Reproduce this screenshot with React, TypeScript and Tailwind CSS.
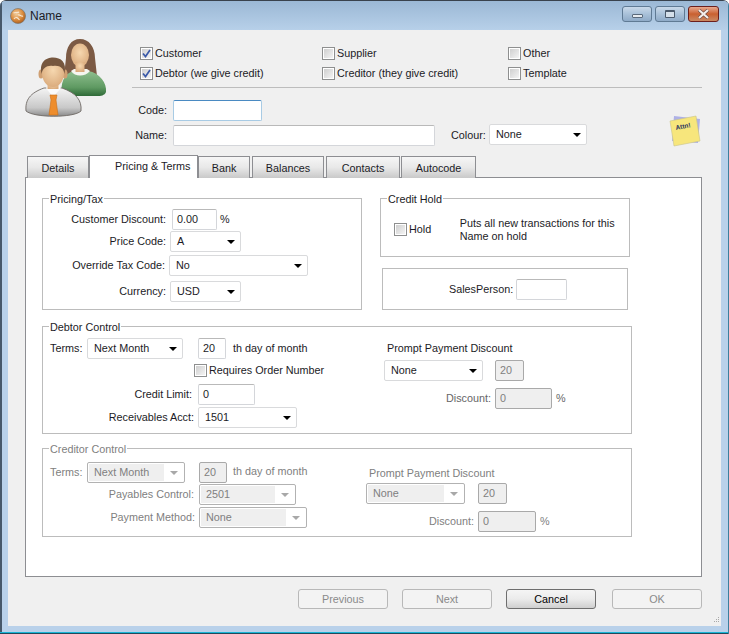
import React from "react";

const font = "font-['Liberation_Sans','Noto_Sans',sans-serif]";

// checkbox with aero style fill
function Check({ checked = false }: { checked?: boolean }) {
  return (
    <div className="flex h-[13px] w-[13px] shrink-0 items-center justify-center border border-[#8e8f8f] bg-white p-px">
      <div className="relative h-full w-full bg-gradient-to-br from-[#cfcfcf] to-[#f4f4f4]">
        {checked && (
          <svg viewBox="0 0 9 9" className="absolute left-0 top-0 h-[9px] w-[9px]">
            <path d="M1 4.5 L3.5 7.5 L8 1" fill="none" stroke="#3b5aa8" strokeWidth="1.7" />
          </svg>
        )}
      </div>
    </div>
  );
}

function CheckRow({ label, checked }: { label: string; checked?: boolean }) {
  return (
    <div className="flex h-[20px] items-start gap-[2px]">
      <Check checked={checked} />
      <span className="-mt-px leading-[14px]">{label}</span>
    </div>
  );
}

function Input({ value, className }: { value?: string; className: string }) {
  return (
    <div className={`flex h-[21px] shrink-0 items-center rounded-[2px] border border-[#d4d6da] border-t-[#b9b9b9] bg-white px-[4px] ${className}`}>
      {value}
    </div>
  );
}

function DisabledInput({ value, className }: { value: string; className: string }) {
  return (
    <div className={`flex h-[21px] shrink-0 items-center rounded-[2px] border border-[#a9a9a9] bg-[#efefef] px-[4px] text-[#808080] ${className}`}>
      {value}
    </div>
  );
}

function Select({ value, className }: { value: string; className: string }) {
  return (
    <div className={`flex h-[21px] shrink-0 items-center justify-between rounded-[2px] border border-[#d9dadc] bg-white pl-[6px] pr-[5px] ${className}`}>
      <span>{value}</span>
      <span className="h-0 w-0 border-x-[4px] border-t-[4px] border-x-transparent border-t-black" />
    </div>
  );
}

function DisabledSelect({ value, className }: { value: string; className: string }) {
  return (
    <div className={`flex h-[21px] shrink-0 items-stretch rounded-[2px] border border-[#b2b2b2] bg-white p-px text-[#808080] ${className}`}>
      <span className="flex flex-1 items-center bg-[#efefef] pl-[5px]">{value}</span>
      <span className="flex w-[19px] items-center justify-center">
        <span className="h-0 w-0 border-x-[4px] border-t-[4px] border-x-transparent border-t-[#a8a8a8]" />
      </span>
    </div>
  );
}

function Tab({ label, className }: { label: string; className: string }) {
  return (
    <div className={`flex h-[22px] items-center justify-center border border-b-0 border-[#8d8e92] bg-gradient-to-b from-[#f6f6f6] via-[#e8e8e8] to-[#c9c9c9] pt-px ${className}`}>
      {label}
    </div>
  );
}

function Group({ title, disabled, className, children }: { title?: string; disabled?: boolean; className: string; children: React.ReactNode }) {
  return (
    <div className={`relative border border-[#bcbcbc] ${className}`}>
      {title && (
        <span className={`absolute left-[6px] top-[-7px] bg-white px-[1px] leading-[14px] ${disabled ? "text-[#808080]" : ""}`}>
          {title}
        </span>
      )}
      {children}
    </div>
  );
}

function Button({ label, active }: { label: string; active?: boolean }) {
  if (active) {
    return (
      <div className="flex h-[20px] w-[90px] items-center justify-center rounded-[3px] border border-[#6e6e6e] bg-gradient-to-b from-[#f5f5f5] via-[#ebebeb] to-[#cfcfcf] text-black">
        {label}
      </div>
    );
  }
  return (
    <div className="flex h-[20px] w-[90px] items-center justify-center rounded-[3px] border border-[#b8b8b8] bg-[#f3f3f3] text-[#8a8a8a]">
      {label}
    </div>
  );
}

function AppIcon() {
  return (
    <svg viewBox="0 0 16 16" className="h-[16px] w-[16px]">
      <defs>
        <radialGradient id="globe" cx="40%" cy="35%" r="70%">
          <stop offset="0%" stopColor="#f2cfa0" />
          <stop offset="60%" stopColor="#d98a3c" />
          <stop offset="100%" stopColor="#a85a1c" />
        </radialGradient>
      </defs>
      <circle cx="8" cy="8" r="7.5" fill="url(#globe)" stroke="#7d7468" strokeWidth="0.7" />
      <path d="M3.5 5 C5.5 3.5 7 5.5 9 4 M4 11 C6 8 8 10 9.5 12 M8 7 C10 6 11 9 13 8" fill="none" stroke="#f7e6cf" strokeWidth="1.1" />
    </svg>
  );
}

function WindowButtons() {
  return (
    <div className="flex gap-[3px]">
      <div className="flex h-[16px] w-[30px] items-end justify-center rounded-[3px] border border-[#5f7a94] bg-gradient-to-b from-[#c9d9e9] via-[#a9c1d9] to-[#8fabc8] pb-[3px]">
        <div className="h-[4px] w-[11px] rounded-[1px] border border-[#5a6a7c] bg-[#e6ebf0]" />
      </div>
      <div className="flex h-[16px] w-[30px] items-center justify-center rounded-[3px] border border-[#5f7a94] bg-gradient-to-b from-[#c9d9e9] via-[#a9c1d9] to-[#8fabc8]">
        <div className="h-[8px] w-[10px] rounded-[1px] border border-t-2 border-[#4b5a6c] bg-[#d5e0ea]" />
      </div>
      <div className="flex h-[16px] w-[31px] items-center justify-center rounded-[3px] border border-[#6c1f1c] bg-gradient-to-b from-[#e8a98e] via-[#c9602f] to-[#c98862]">
        <svg viewBox="0 0 13 10" className="h-[10px] w-[13px]">
          <path d="M2 1 L11 9 M11 1 L2 9" stroke="#6a4a44" strokeWidth="3.4" />
          <path d="M2 1 L11 9 M11 1 L2 9" stroke="#f4eeea" strokeWidth="2.2" />
        </svg>
      </div>
    </div>
  );
}

function People() {
  return (
    <svg viewBox="25 38 82 80" className="h-[80px] w-[82px]">
      <defs>
        <linearGradient id="green" x1="0" y1="0" x2="0" y2="1">
          <stop offset="0%" stopColor="#8fbf8f" />
          <stop offset="65%" stopColor="#5f9a62" />
          <stop offset="100%" stopColor="#2f6a38" />
        </linearGradient>
        <linearGradient id="shirt" x1="0" y1="0" x2="0" y2="1">
          <stop offset="0%" stopColor="#f4f4f4" />
          <stop offset="70%" stopColor="#c8c8c8" />
          <stop offset="100%" stopColor="#8a8a8a" />
        </linearGradient>
        <radialGradient id="skin" cx="50%" cy="40%" r="65%">
          <stop offset="0%" stopColor="#f6d8b0" />
          <stop offset="100%" stopColor="#d9a97a" />
        </radialGradient>
      </defs>
      {/* woman */}
      <path d="M80 39 C71 39 66 47 66 58 L64 76 L97 76 L95 58 C95 47 89 39 80 39 Z" fill="#7c5a44" />
      <path d="M62 96 C60 83 64 74 73 71 L88 71 C100 73 107 83 106 92 C104 97 98 96 90 96 Z" fill="url(#green)" />
      <path d="M71 71 C75 77 85 77 90 71 L87 69 L74 69 Z" fill="#f6f6f0" />
      <ellipse cx="80" cy="55" rx="9" ry="11.5" fill="url(#skin)" />
      <rect x="75.5" y="62" width="9" height="10" fill="url(#skin)" />
      {/* man */}
      <path d="M26 111 C25 100 30 93 44 88 L62 88 C76 93 82 100 81 111 C74 118 34 118 26 111 Z" fill="url(#shirt)" stroke="#6f6a65" strokeWidth="0.9" />
      <path d="M46 88 L53 97 L61 88 L58 84 L49 84 Z" fill="#fbfbfb" />
      <path d="M50 95 L57 95 L56 100 L58 115 L49 115 L51 100 Z" fill="#ee8d2c" stroke="#c96e18" strokeWidth="0.6" />
      <ellipse cx="41" cy="74" rx="2.5" ry="4.5" fill="#cf9f72" />
      <ellipse cx="65" cy="74" rx="2.5" ry="4.5" fill="#cf9f72" />
      <rect x="47.5" y="80" width="11" height="9" fill="url(#skin)" />
      <ellipse cx="53" cy="73" rx="11" ry="14" fill="url(#skin)" />
      <path d="M41.5 74 C39 62 46 57.5 53 57.5 C61 57.5 67 62 64.5 74 C63.5 68 60 65 53 66 C47 65 42.5 68 41.5 74 Z" fill="#76573f" />
    </svg>
  );
}

function Sticky() {
  return (
    <svg viewBox="0 0 32 33" className="-mt-[10px] h-[33px] w-[32px] shrink-0">
      <polygon points="5,1 31,4 29,28 3,26" fill="#aeb1e6" />
      <polygon points="1,6 27,1 31,26 5,31" fill="#f7e67c" stroke="#c9c48a" strokeWidth="0.6" />
      <text x="7" y="15" fontSize="6.5" fontWeight="700" fill="#26305e" transform="rotate(-11 7 15)" fontFamily="Liberation Sans, sans-serif">
        Attn!
      </text>
    </svg>
  );
}

export default function App() {
  return (
    <div className={`${font} relative h-[634px] w-[729px] overflow-hidden rounded-t-[6px] border-t border-[#39424d] bg-[#b9d1ea] text-[10.8px] text-[#1b1b26]`}>
      {/* Title bar */}
      <div className="flex h-[29px] items-center bg-gradient-to-b from-[#9bb8d5] to-[#b7d0e9] pl-[10px] pr-[10px]">
        <AppIcon />
        <span className="ml-[4px] text-[12px]">Name</span>
        <div className="ml-auto -mt-[4px]">
          <WindowButtons />
        </div>
      </div>

      {/* Dialog body */}
      <div className="relative ml-[8px] h-[596px] w-[713px] bg-[#f0f0f0]">
        <div className="flex">
          <div className="w-[124px] shrink-0 pl-[17px] pt-[8px]">
            <People />
          </div>
          <div>
            <div className="grid grid-cols-[182px_186px_auto] pl-[8px] pt-[17px]">
              <CheckRow label="Customer" checked />
              <CheckRow label="Supplier" />
              <CheckRow label="Other" />
              <CheckRow label="Debtor (we give credit)" checked />
              <CheckRow label="Creditor (they give credit)" />
              <CheckRow label="Template" />
            </div>
            <div className="h-px w-[570px] bg-[#bdbdbd]" />
            <div className="mt-[12px] flex items-center">
              <span className="w-[35px] text-right">Code:</span>
              <div className="ml-[6px] flex h-[21px] w-[89px] rounded-[2px] border border-[#a8cbe4] border-t-[#4a8ac2] bg-white" />
            </div>
            <div className="mt-[4px] flex h-[21px] items-start">
              <span className="flex h-[21px] w-[35px] items-center justify-end">Name:</span>
              <Input className="ml-[6px] w-[262px]" />
              <span className="ml-[16px] flex h-[21px] w-[38px] items-center">Colour:</span>
              <Select value="None" className="-mt-px w-[98px]" />
              <div className="ml-[82px]">
                <Sticky />
              </div>
            </div>
          </div>
        </div>

        {/* Tabs */}
        <div className="relative z-10 -mb-px ml-[19px] mt-[9px] flex h-[23px] items-end">
          <Tab label="Details" className="w-[62px]" />
          <div className="h-[23px] w-[109px] border border-b-0 border-[#8d8e92] bg-white pl-[25px] pt-[2px] leading-[16px]">Pricing &amp; Terms</div>
          <Tab label="Bank" className="w-[52px]" />
          <Tab label="Balances" className="ml-[2px] w-[72px]" />
          <Tab label="Contacts" className="ml-[2px] w-[74px]" />
          <Tab label="Autocode" className="ml-px w-[75px]" />
        </div>

        {/* Panel */}
        <div className="ml-[17px] h-[400px] w-[677px] border border-[#8d8e92] bg-white pl-[16px] pt-[20px]">
          <div className="flex">
            <Group title="Pricing/Tax" className="h-[112px] w-[320px] pt-[10px]">
              <div className="flex items-center">
                <span className="w-[123px] text-right">Customer Discount:</span>
                <Input value="0.00" className="ml-[6px] w-[45px]" />
                <span className="ml-[3px]">%</span>
              </div>
              <div className="mt-px flex items-center">
                <span className="w-[123px] text-right">Price Code:</span>
                <Select value="A" className="ml-[4px] w-[71px]" />
              </div>
              <div className="mt-[3px] flex items-center">
                <span className="w-[122px] text-right">Override Tax Code:</span>
                <Select value="No" className="ml-[4px] w-[139px]" />
              </div>
              <div className="mt-[5px] flex items-center">
                <span className="w-[123px] text-right">Currency:</span>
                <Select value="USD" className="ml-[4px] w-[71px]" />
              </div>
            </Group>
            <div className="ml-[18px]">
              <Group title="Credit Hold" className="h-[59px] w-[250px]">
                <div className="mt-[16px] flex items-center pl-[13px]">
                  <Check />
                  <span className="ml-[2px] w-[51px]">Hold</span>
                  <p className="w-[170px] pt-[2px] leading-[13px]">Puts all new transactions for this Name on hold</p>
                </div>
              </Group>
              <Group className="ml-[2px] mt-[11px] flex h-[42px] w-[246px] items-center pl-[66px]">
                <span className="w-[62px] text-right">SalesPerson:</span>
                <Input className="ml-[5px] w-[51px]" />
              </Group>
            </div>
          </div>

          <Group title="Debtor Control" className="mt-[16px] flex h-[108px] w-[590px]">
            <div className="w-[341px] shrink-0 pt-[11px]">
              <div className="flex items-center">
                <span className="ml-[7px] w-[37px]">Terms:</span>
                <Select value="Next Month" className="w-[96px]" />
                <Input value="20" className="ml-[15px] w-[28px]" />
                <span className="ml-[7px]">th day of month</span>
              </div>
              <div className="mt-[5px] flex h-[13px] items-center pl-[151px]">
                <Check />
                <span className="ml-[2px]">Requires Order Number</span>
              </div>
              <div className="mt-[7px] flex items-center">
                <span className="w-[149px] text-right">Credit Limit:</span>
                <Input value="0" className="ml-[6px] w-[57px]" />
              </div>
              <div className="mt-[2px] flex items-center">
                <span className="w-[151px] text-right">Receivables Acct:</span>
                <Select value="1501" className="ml-[4px] w-[99px]" />
              </div>
            </div>
            <div className="pt-[14px]">
              <div className="ml-[3px] h-[14px] leading-[14px]">Prompt Payment Discount</div>
              <div className="mt-[5px] flex">
                <Select value="None" className="w-[99px]" />
                <DisabledInput value="20" className="ml-[12px] w-[29px]" />
              </div>
              <div className="mt-[7px] flex items-center">
                <span className="w-[107px] text-right text-[#666]">Discount:</span>
                <DisabledInput value="0" className="ml-[4px] w-[57px]" />
                <span className="ml-[4px] text-[#666]">%</span>
              </div>
            </div>
          </Group>

          <Group title="Creditor Control" disabled className="mt-[14px] flex h-[89px] w-[590px] text-[#808080]">
            <div className="w-[323px] shrink-0 pt-[13px]">
              <div className="flex items-center">
                <span className="ml-[7px] w-[37px]">Terms:</span>
                <DisabledSelect value="Next Month" className="w-[98px]" />
                <DisabledInput value="20" className="ml-[14px] w-[28px]" />
                <span className="-mt-[3px] ml-[6px]">th day of month</span>
              </div>
              <div className="mt-px flex items-center">
                <span className="w-[151px] text-right">Payables Control:</span>
                <DisabledSelect value="2501" className="ml-[5px] w-[97px]" />
              </div>
              <div className="mt-[2px] flex items-center">
                <span className="w-[152px] text-right">Payment Method:</span>
                <DisabledSelect value="None" className="ml-[4px] w-[108px]" />
              </div>
            </div>
            <div className="pt-[17px]">
              <div className="ml-[3px] h-[14px] leading-[14px]">Prompt Payment Discount</div>
              <div className="mt-[3px] flex">
                <DisabledSelect value="None" className="w-[99px]" />
                <DisabledInput value="20" className="ml-[13px] w-[29px]" />
              </div>
              <div className="mt-[7px] flex items-center">
                <span className="w-[108px] text-right">Discount:</span>
                <DisabledInput value="0" className="ml-[4px] w-[58px]" />
                <span className="ml-[4px]">%</span>
              </div>
            </div>
          </Group>
        </div>

        {/* Buttons */}
        <div className="ml-[290px] mt-[12px] flex">
          <Button label="Previous" />
          <div className="ml-[14px]"><Button label="Next" /></div>
          <div className="ml-[14px]"><Button label="Cancel" active /></div>
          <div className="ml-[16px]"><Button label="OK" /></div>
        </div>

        {/* Resize grip */}
        <svg viewBox="0 0 7 7" className="absolute bottom-[2px] right-[1px] h-[7px] w-[7px]">
          <g fill="#a9a9a9">
            <rect x="5" y="0" width="1" height="1" />
            <rect x="3" y="2" width="1" height="1" />
            <rect x="5" y="2" width="1" height="1" />
            <rect x="1" y="4" width="1" height="1" />
            <rect x="3" y="4" width="1" height="1" />
            <rect x="5" y="4" width="1" height="1" />
          </g>
        </svg>
      </div>

      {/* Window edge */}
      <div className="absolute bottom-0 left-0 h-full w-[2px] bg-[#47586a]" />
      <div className="absolute bottom-[1px] left-0 h-px w-full bg-[#19b5d6]" />
      <div className="absolute bottom-0 left-0 h-px w-full bg-[#1e4a5c]" />
      <div className="absolute bottom-0 right-0 h-full w-px bg-[#3d7f9c]" />
    </div>
  );
}
